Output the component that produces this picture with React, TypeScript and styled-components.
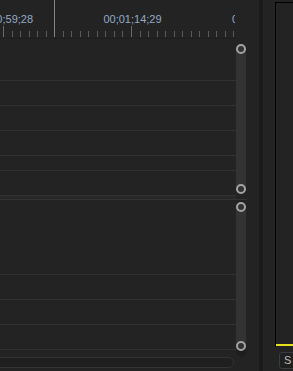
import React from "react";
import styled, { createGlobalStyle } from "styled-components";

const GlobalStyle = createGlobalStyle`
  html, body {
    margin: 0;
    padding: 0;
    background: #232323;
    overflow: hidden;
  }
  body {
    font-family: "Liberation Sans", Arial, sans-serif;
  }
`;

const Frame = styled.div`
  display: flex;
  width: 293px;
  height: 371px;
  background: #232323;
  overflow: hidden;
`;

const Timeline = styled.div`
  width: 236px;
  flex: none;
  display: flex;
  flex-direction: column;
  overflow: hidden;
`;

const Ruler = styled.div`
  height: 38px;
  border-bottom: 1px solid #1e1e1e;
  flex: none;
`;

const Track = styled.div<{ $h: number }>`
  height: ${(p) => p.$h}px;
  flex: none;
  border-bottom: 1px solid #313131;
`;

const Divider = styled.div`
  height: 3px;
  flex: none;
  background: #282828;
  border-bottom: 1px solid #333;
`;

const HScrollArea = styled.div`
  flex: 1;
  padding-top: 7px;
`;

const HScroll = styled.div`
  height: 9px;
  margin-left: -12px;
  margin-right: 2px;
  border: 1px solid #333;
  border-radius: 6px;
  background: #1f1f1f;
`;

const ScrollCol = styled.div`
  width: 11px;
  flex: none;
  display: flex;
  flex-direction: column;
  padding-top: 44px;
`;

const ScrollLine = styled.div`
  height: 1px;
  margin: 5px 0 1px;
  background: #333;
`;

const ScrollTrack = styled.div<{ $h: number }>`
  width: 10px;
  height: ${(p) => p.$h}px;
  border-radius: 5px;
  background: #1e1e1e;
  display: flex;
  flex-direction: column;
`;

const Thumb = styled.div<{ $h: number; $top?: number }>`
  height: ${(p) => p.$h}px;
  margin-top: ${(p) => p.$top ?? 0}px;
  border-radius: 5px;
  background: #333;
  display: flex;
  flex-direction: column;
  justify-content: space-between;
`;

const Handle = styled.div`
  width: 10px;
  height: 10px;
  box-sizing: border-box;
  border: 2px solid #a3a3a3;
  border-radius: 50%;
  background: #333;
`;

const Gap = styled.div<{ $w: number; $dark?: boolean }>`
  width: ${(p) => p.$w}px;
  flex: none;
  background: ${(p) => (p.$dark ? "#1a1a1a" : "#232323")};
`;

const Side = styled.div`
  flex: 1;
  display: flex;
  flex-direction: column;
  padding-top: 2px;
  overflow: hidden;
`;

const Monitor = styled.div`
  height: 344px;
  border-top: 1px solid #000;
  border-left: 1px solid #000;
  display: flex;
  flex-direction: column;
  justify-content: flex-end;
`;

const InPoint = styled.div`
  height: 2px;
  margin-bottom: 1px;
  background: #e6e01e;
`;

const SideButton = styled.div`
  margin: 5px 0 0 4px;
  width: 24px;
  height: 15px;
  border: 1px solid #3b3b3b;
  border-radius: 3px;
  background: #1f1f1f;
  color: #bdbdbd;
  font-size: 11px;
  line-height: 15px;
  padding-left: 4px;
`;

const TICK = 128 / 15;

const RulerSvg: React.FC = () => {
  const ticks = [];
  for (let k = 0; k < 28; k++) {
    if (k === 6) continue;
    const x = Math.round(3.5 + k * TICK - 0.5);
    const major = k % 15 === 0;
    ticks.push(
      <rect
        key={k}
        x={x}
        y={major ? 26 : 31}
        width={1}
        height={major ? 11 : 6}
        fill={major ? "#6a6a6a" : "#5a5a5a"}
      />
    );
  }
  const labels = [
    { x: 4, t: "00;00;59;28" },
    { x: 132.5, t: "00;01;14;29" },
    { x: 261, t: "00;01;29;29" },
  ];
  return (
    <svg width={235} height={38} shapeRendering="crispEdges">
      {ticks}
      <rect x={54} y={0} width={1} height={37} fill="#858585" />
      {labels.map((l) => (
        <text
          key={l.t}
          x={l.x}
          y={23}
          textAnchor="middle"
          fontFamily="Liberation Sans, Arial, sans-serif"
          fontSize={11}
          fill="#94aac6"
        >
          {l.t}
        </text>
      ))}
    </svg>
  );
};

const upper = [41, 24, 24, 24, 14, 24];
const lower = [74, 24, 24, 24];

const App: React.FC = () => {
  return (
    <>
      <GlobalStyle />
      <Frame>
        <Timeline>
          <Ruler>
            <RulerSvg />
          </Ruler>
          {upper.map((h, i) => (
            <Track key={"u" + i} $h={h} />
          ))}
          <Divider />
          {lower.map((h, i) => (
            <Track key={"l" + i} $h={h} />
          ))}
          <HScrollArea>
            <HScroll />
          </HScrollArea>
        </Timeline>

        <ScrollCol>
          <ScrollTrack $h={150}>
            <Thumb $h={150}>
              <Handle />
              <Handle />
            </Thumb>
          </ScrollTrack>
          <ScrollLine />
          <ScrollTrack $h={156}>
            <Thumb $h={149} $top={1}>
              <Handle />
              <Handle />
            </Thumb>
          </ScrollTrack>
        </ScrollCol>

        <Gap $w={12} />
        <Gap $w={4} $dark />
        <Gap $w={12} />

        <Side>
          <Monitor>
            <InPoint />
          </Monitor>
          <SideButton>S</SideButton>
        </Side>
      </Frame>
    </>
  );
};

export default App;
